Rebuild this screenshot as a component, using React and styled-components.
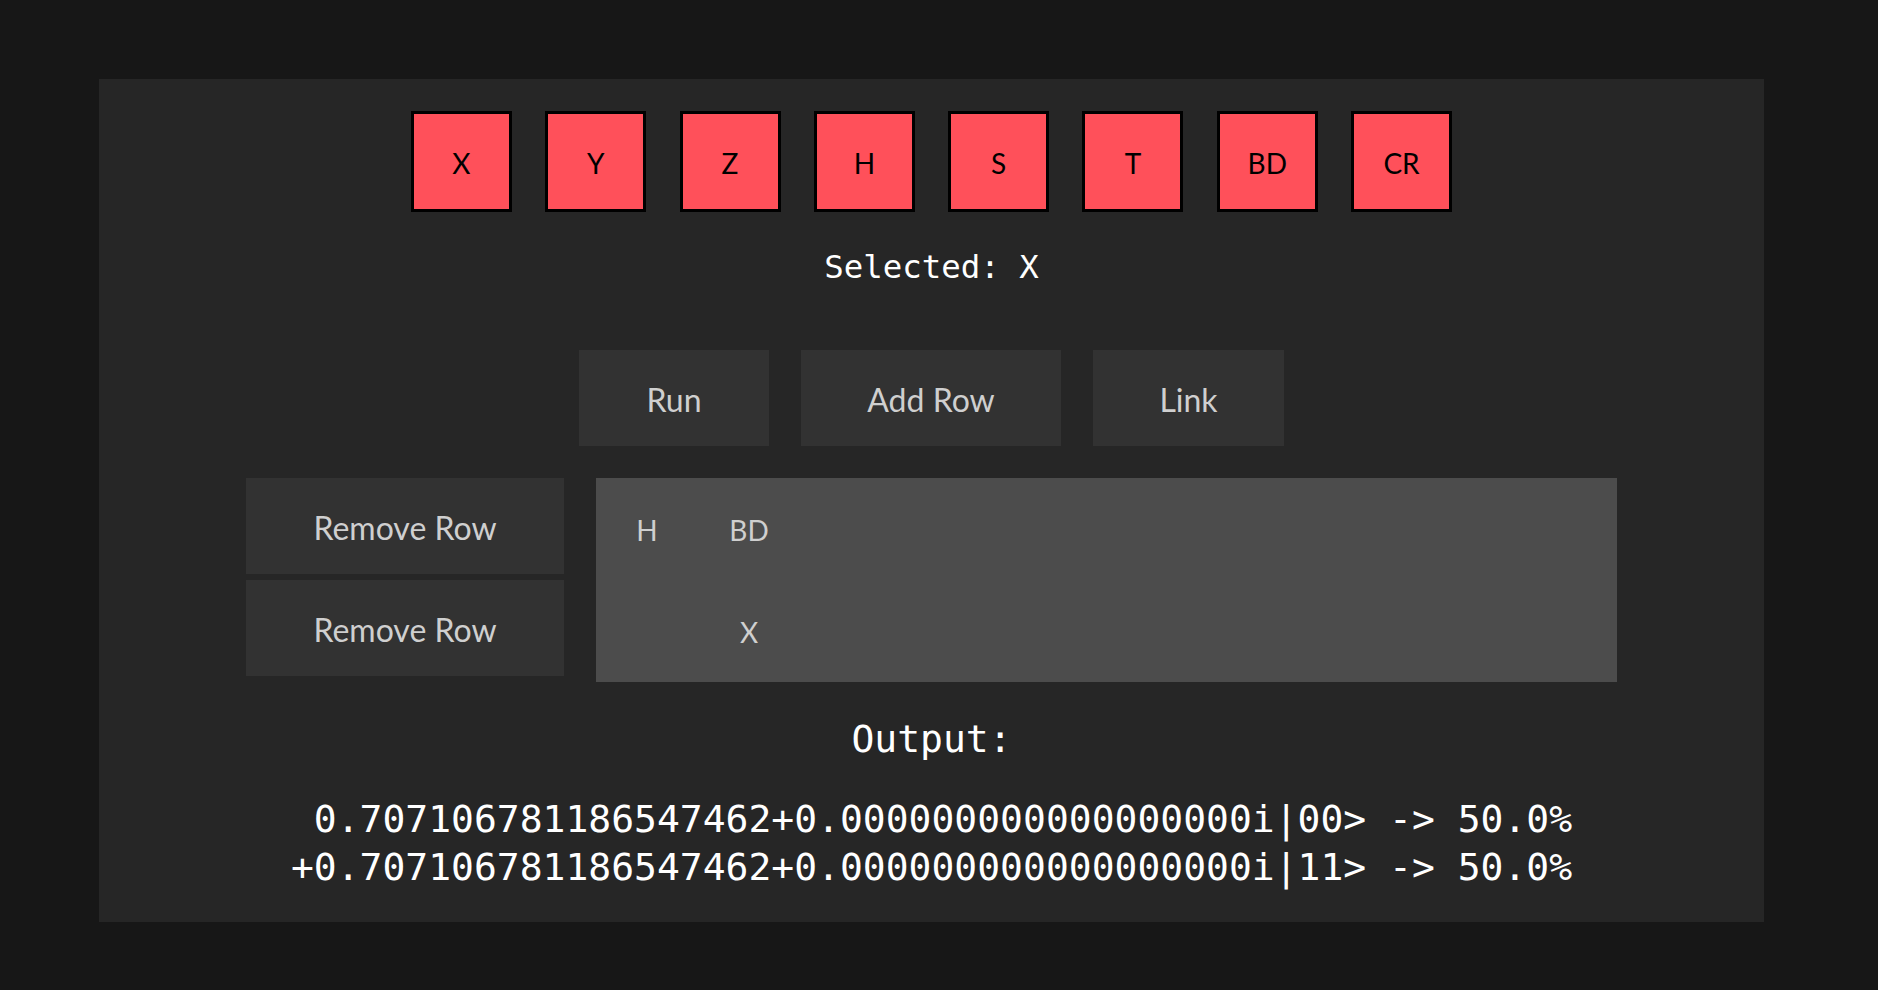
import React, { useState } from "react";
import styled, { createGlobalStyle } from "styled-components";

const GlobalStyle = createGlobalStyle`
  html, body {
    margin: 0;
    padding: 0;
    background: #171717;
  }
  * {
    box-sizing: border-box;
  }
`;

const uiFont = `Lato, "Open Sans", "Noto Sans", sans-serif`;
const monoFont = `"DejaVu Sans Mono", "Liberation Mono", monospace`;

const Page = styled.div`
  width: 1878px;
  height: 990px;
  padding: 79px 0 68px 99px;
  background: #171717;
`;

const Panel = styled.div`
  width: 1665px;
  height: 843px;
  background: #262626;
  display: flex;
  flex-direction: column;
  align-items: center;
  padding: 32px 0 31px;
`;

const GateBar = styled.div`
  display: flex;
  gap: 33.3px;
`;

const Gate = styled.button`
  width: 101px;
  height: 101px;
  padding: 2px 0 0;
  border: 3px solid #000;
  background: #ff505a;
  color: #000;
  font-family: ${uiFont};
  font-size: 28px;
  display: flex;
  align-items: center;
  justify-content: center;
  cursor: pointer;
`;

const Selected = styled.div`
  margin-top: 36px;
  font-family: ${monoFont};
  font-size: 32.4px;
  line-height: 38px;
  color: #fff;
  white-space: pre;
`;

const Controls = styled.div`
  margin-top: 64px;
  display: flex;
  gap: 32px;
`;

const ActionButton = styled.button`
  width: ${({ $w }) => $w}px;
  height: 96px;
  padding: 2px 0 0;
  border: none;
  background: #323232;
  color: #cfcfcf;
  font-family: ${uiFont};
  font-size: 32px;
  cursor: pointer;
`;

const Workspace = styled.div`
  margin-top: 32px;
  display: flex;
  gap: 32px;
`;

const RemoveColumn = styled.div`
  display: flex;
  flex-direction: column;
  gap: 6px;
`;

const Circuit = styled.div`
  width: 1021px;
  height: 204px;
  background: #4c4c4c;
  display: flex;
  flex-direction: column;
`;

const Wire = styled.div`
  display: flex;
  height: 102px;
`;

const Cell = styled.div`
  width: 102px;
  height: 102px;
  padding-top: 2px;
  display: flex;
  align-items: center;
  justify-content: center;
  font-family: ${uiFont};
  font-size: 28px;
  color: #cfcfcf;
`;

const OutputTitle = styled.div`
  margin-top: 35px;
  font-family: ${monoFont};
  font-size: 38px;
  line-height: 44px;
  color: #fff;
`;

const OutputText = styled.pre`
  margin: 34px 0 0;
  font-family: ${monoFont};
  font-size: 38px;
  line-height: 48.3px;
  color: #fff;
  text-align: center;
`;

const gates = ["X", "Y", "Z", "H", "S", "T", "BD", "CR"];

const rows = [
  ["H", "BD"],
  ["", "X"],
];

const output = [
  " 0.707106781186547462+0.000000000000000000i|00> -> 50.0%",
  "+0.707106781186547462+0.000000000000000000i|11> -> 50.0%",
];

export default function App() {
  const [selected, setSelected] = useState("X");

  return (
    <Page>
      <GlobalStyle />
      <Panel>
        <GateBar>
          {gates.map((g) => (
            <Gate key={g} onClick={() => setSelected(g)}>
              {g}
            </Gate>
          ))}
        </GateBar>
        <Selected>Selected: {selected}</Selected>
        <Controls>
          <ActionButton $w={190}>Run</ActionButton>
          <ActionButton $w={260}>Add Row</ActionButton>
          <ActionButton $w={191}>Link</ActionButton>
        </Controls>
        <Workspace>
          <RemoveColumn>
            {rows.map((_, i) => (
              <ActionButton key={i} $w={318}>
                Remove Row
              </ActionButton>
            ))}
          </RemoveColumn>
          <Circuit>
            {rows.map((row, i) => (
              <Wire key={i}>
                {row.map((c, j) => (
                  <Cell key={j}>{c}</Cell>
                ))}
              </Wire>
            ))}
          </Circuit>
        </Workspace>
        <OutputTitle>Output:</OutputTitle>
        <OutputText>{output.join("\n")}</OutputText>
      </Panel>
    </Page>
  );
}
